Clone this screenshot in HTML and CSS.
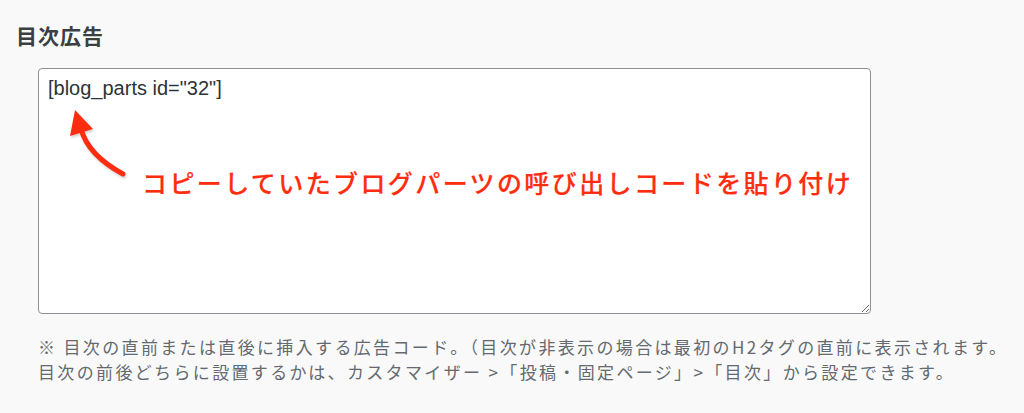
FILE: index.html
```html
<!DOCTYPE html>
<html lang="ja">
<head>
<meta charset="utf-8">
<title>目次広告</title>
<link rel="stylesheet" href="styles.css">
</head>
<body>
<div class="page">
  <h2 class="title">目次広告</h2>
  <div class="field">
    <div class="editor">
      <textarea class="code" spellcheck="false">[blog_parts id="32"]</textarea>
      <svg class="arrow" width="140" height="90" viewBox="60 100 140 90" aria-hidden="true">
        <path d="M123 174 Q88 155 81 129" fill="none" stroke="#ff2d0f" stroke-width="5" stroke-linecap="round"/>
        <polygon points="75,110 70,136 93,129" fill="#ff2d0f"/>
      </svg>
      <p class="note">コピーしていたブログパーツの呼び出しコードを貼り付け</p>
    </div>
    <p class="desc">※ 目次の直前または直後に挿入する広告コード。（目次が非表示の場合は最初のH2タグの直前に表示されます。<br>目次の前後どちらに設置するかは、カスタマイザー &gt;「投稿・固定ページ」&gt;「目次」から設定できます。</p>
  </div>
</div>
</body>
</html>
```
FILE: styles.css
```css
html, body {
  margin: 0;
  padding: 0;
  background: #f9f9f9;
}
.page {
  width: 1024px;
  height: 413px;
  padding: 20px 0 0 16px;
  box-sizing: border-box;
  font-family: "Noto Sans CJK JP", "Noto Sans", sans-serif;
}
.title {
  margin: 0;
  font-size: 21px;
  line-height: 30px;
  font-weight: 700;
  letter-spacing: 1px;
  color: #3a3f44;
}
.field {
  padding: 18px 0 0 22px;
}
.editor {
  position: relative;
  width: 833px;
  height: 246px;
}
.code {
  display: block;
  width: 833px;
  height: 246px;
  box-sizing: border-box;
  margin: 0;
  padding: 6px 9px;
  border: 1px solid #8c8f94;
  border-radius: 4px;
  background: #fff;
  font-family: "Liberation Sans", Arial, sans-serif;
  font-size: 20px;
  line-height: 27px;
  color: #2c3338;
  resize: vertical;
  outline: none;
}
.arrow {
  position: absolute;
  left: 22px;
  top: 32px;
  overflow: visible;
  filter: drop-shadow(1px 2px 1px rgba(0,0,0,0.18));
}
.note {
  position: absolute;
  left: 104px;
  top: 96px;
  margin: 0;
  font-size: 25px;
  line-height: 36px;
  font-weight: 500;
  letter-spacing: 2.4px;
  color: #ff2d0f;
  white-space: nowrap;
  -webkit-text-stroke: 0.2px #ff2d0f;
}
.desc {
  margin: 20px 0 0;
  font-size: 17px;
  line-height: 25px;
  letter-spacing: 2.35px;
  color: #646970;
  white-space: nowrap;
}
```
